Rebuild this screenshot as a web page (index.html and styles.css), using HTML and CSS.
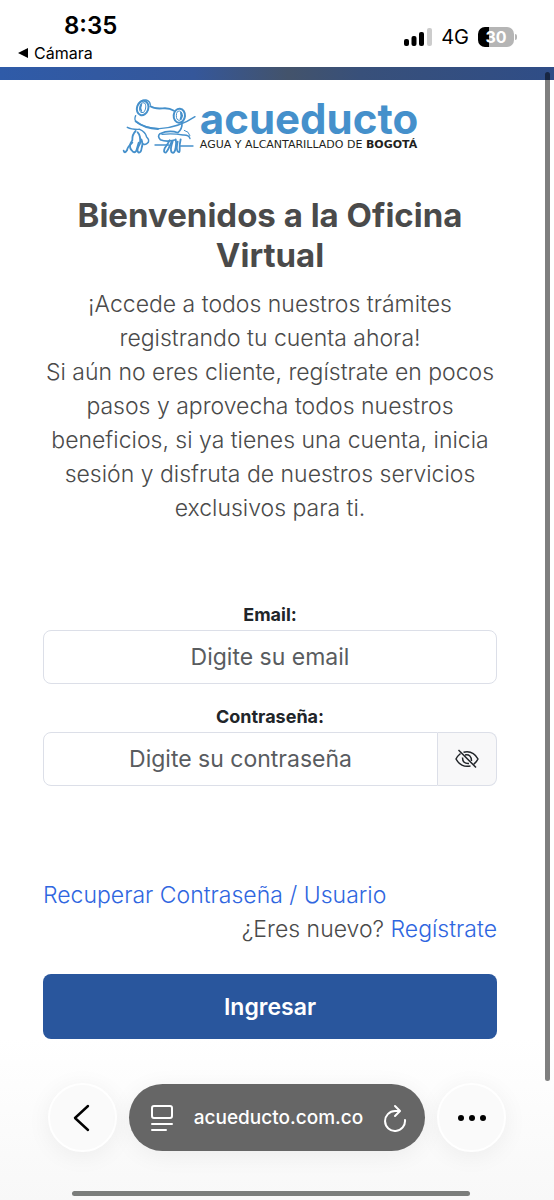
FILE: index.html
```html
<!DOCTYPE html>
<html lang="es">
<head>
  <meta charset="UTF-8">
  <meta name="viewport" content="width=device-width, initial-scale=1.0">
  <title>Oficina Virtual - Acueducto de Bogotá</title>
  <link rel="stylesheet" href="styles.css">
</head>
<body>
  <header class="status-bar">
    <div class="status-left">
      <span class="time">8:35</span>
      <a class="back-app" href="#">
        <svg width="10" height="10" viewBox="0 0 10 10"><path d="M0 5L10 0V10Z" fill="#000"/></svg>
        Cámara
      </a>
    </div>
    <div class="status-right">
      <svg width="28" height="18" viewBox="0 0 28 18">
        <rect x="0" y="11" width="5" height="7" rx="2"/>
        <rect x="7.500" y="8" width="5" height="10" rx="2"/>
        <rect x="15" y="4" width="5" height="14" rx="2"/>
        <rect x="23" y="0" width="5" height="18" rx="2" fill="#ccc"/>
      </svg>
      <span class="network">4G</span>
      <span class="battery">30</span>
    </div>
  </header>
  <div class="banner"></div>

  <main class="content">
    <div class="logo">
      <svg class="frog" viewBox="36 24 220 174" fill="none" stroke="#4590cb" stroke-width="5.500" stroke-linecap="round" stroke-linejoin="round">
        <ellipse cx="97" cy="54" rx="17" ry="22" transform="rotate(18 97 54)" stroke-width="6"/>
        <ellipse cx="97" cy="53" rx="9" ry="15" transform="rotate(12 97 53)" stroke-width="3"/>
        <path d="M93 44Q88 53 93 63" stroke-width="5"/>
        <path d="M84 43Q91 29 107 30Q119 33 120 45" stroke-width="4"/>
        <ellipse cx="207" cy="77" rx="17" ry="21" transform="rotate(5 207 77)" stroke-width="6"/>
        <ellipse cx="207" cy="77" rx="9" ry="14" stroke-width="3"/>
        <path d="M212 68Q215 77 211 87" stroke-width="6"/>
        <path d="M120 49Q132 57 157 55Q176 53 191 62"/>
        <path d="M76 77Q70 89 79 97Q104 115 147 116Q206 113 254 80" stroke-width="4"/>
        <path d="M76 94Q103 116 143 117" stroke-width="6"/>
        <path d="M51 112Q64 119 88 118Q105 125 109 141Q117 148 114 157Q107 166 99 162" stroke-width="4.500"/>
        <path d="M76 123Q65 134 66 151Q53 169 64 181Q72 192 78 182Q81 172 85 158"/>
        <path d="M66 158Q51 171 50 181Q43 192 40 182"/>
        <path d="M82 127Q92 137 89 161Q77 182 84 187Q92 190 94 174Q99 161 93 148"/>
        <path d="M215 98Q216 117 203 128Q176 119 149 131Q140 139 150 149Q168 157 193 150" stroke-width="5"/>
        <path d="M155 133Q186 129 218 135Q236 134 239 146" stroke-width="4"/>
        <path d="M222 121Q236 124 239 137" stroke-width="3"/>
        <path d="M134 165H175M210 168H248" stroke-width="4"/>
        <path d="M178 151Q170 165 163 175Q158 188 166 188Q172 184 184 155"/>
        <path d="M187 154Q178 179 184 187Q193 193 196 173Q199 158 196 148"/>
        <path d="M202 155Q197 178 202 184Q208 190 208 181Q207 163 211 148"/>
      </svg>
      <div class="logo-text">
        <span class="logo-name">acueducto</span>
        <span class="logo-sub">AGUA Y ALCANTARILLADO DE <b>BOGOTÁ</b></span>
      </div>
    </div>

    <h1>Bienvenidos a la Oficina Virtual</h1>
    <p class="intro">¡Accede a todos nuestros trámites registrando tu cuenta ahora!<br>
      Si aún no eres cliente, regístrate en pocos pasos y aprovecha todos nuestros beneficios, si ya tienes una cuenta, inicia sesión y disfruta de nuestros servicios exclusivos para ti.</p>

    <form class="login-form">
      <label for="email">Email:</label>
      <input type="email" id="email" placeholder="Digite su email">

      <label for="password">Contraseña:</label>
      <div class="input-group">
        <input type="password" id="password" placeholder="Digite su contraseña">
        <button type="button" class="toggle-btn" aria-label="Mostrar contraseña">
          <svg width="24" height="20" viewBox="0 0 24 20" fill="none" stroke="#212529" stroke-width="1.500">
            <path d="M8.500 3.200Q18 1 23 10Q21.500 13 18.500 15.500M15.500 17Q6 19 1 10Q2.500 7 5.500 4.500"/>
            <path d="M10 6Q16.500 5 16.500 12M14 14.500Q7.500 15 7.500 8.500"/>
            <path d="M3.500 1L21 18.500"/>
          </svg>
        </button>
      </div>

      <div class="links">
        <a href="#">Recuperar Contraseña / Usuario</a>
        <p class="register">¿Eres nuevo? <a href="#">Regístrate</a></p>
      </div>
      <button type="submit" class="submit-btn">Ingresar</button>
    </form>
  </main>

  <footer class="browser-bar">
    <nav class="browser-nav">
      <button type="button" class="round-btn" aria-label="Atrás">
        <svg width="20" height="28" viewBox="0 0 20 28" fill="none" stroke="#000" stroke-width="2.400" stroke-linecap="round" stroke-linejoin="round"><path d="M15 2L2 14L15 26"/></svg>
      </button>
      <div class="address">
        <svg width="24" height="28" viewBox="0 0 24 28" fill="none" stroke="#fff" stroke-width="2" stroke-linecap="round">
          <rect x="2" y="2" width="20" height="12" rx="2"/>
          <path d="M2 20H22M2 26H16"/>
        </svg>
        <span>acueducto.com.co</span>
        <button type="button" class="reload-btn" aria-label="Recargar">
          <svg width="24" height="28" viewBox="0 0 24 28" fill="none" stroke="#fff" stroke-width="2" stroke-linecap="round" stroke-linejoin="round">
            <path d="M16 7H12A10 10 0 1 0 22 16"/>
            <path d="M12 2L17 7L12 12"/>
          </svg>
        </button>
      </div>
      <button type="button" class="round-btn" aria-label="Más opciones">
        <svg width="28" height="6" viewBox="0 0 28 6"><circle cx="3" cy="3" r="3"/><circle cx="14" cy="3" r="3"/><circle cx="25" cy="3" r="3"/></svg>
      </button>
    </nav>
    <div class="home-indicator"></div>
  </footer>
  <div class="scroll-thumb"></div>
</body>
</html>
```
FILE: styles.css
```css
* {
  box-sizing: border-box;
}
body {
  font-family: Inter, 'Liberation Sans', sans-serif;
  background: #fff;
  color: #4a4a4a;
  margin: 0;
  min-height: 100vh;
  display: flex;
  flex-direction: column;
  position: relative;
}
svg {
  display: block;
}
button {
  font-family: inherit;
  border: none;
  padding: 0;
  cursor: pointer;
}
a {
  color: #2f66e0;
  text-decoration: none;
}

/* status bar */
.status-bar {
  height: 67px;
  padding: 12px 40px 0 18px;
  display: flex;
  justify-content: space-between;
  color: #000;
}
.status-left {
  display: flex;
  flex-direction: column;
}
.time {
  font-size: 24px;
  font-weight: 600;
  line-height: 28px;
  padding-left: 46px;
}
.back-app {
  display: flex;
  align-items: center;
  gap: 6px;
  font-size: 16px;
  line-height: 26px;
  color: #000;
}
.status-right {
  display: flex;
  align-items: center;
  gap: 9px;
  height: 50px;
}
.network {
  font-size: 20px;
}
.battery {
  position: relative;
  width: 36px;
  height: 20px;
  border-radius: 7px;
  background: linear-gradient(to right, #000 30%, #b5b5b5 30%);
  color: #fff;
  font-size: 16px;
  font-weight: 700;
  line-height: 20px;
  text-align: center;
}
.battery::after {
  content: "";
  position: absolute;
  left: 37px;
  top: 7px;
  width: 2px;
  height: 6px;
  border-radius: 0 2px 2px 0;
  background: #b5b5b5;
}
.banner {
  height: 13px;
  background: linear-gradient(to right, #2f5ba8, #35579a 35%, #43536b 52%, #38507a 65%, #2f4d87);
}

/* login page */
.content {
  flex: 1;
  padding: 18px 57px 0 43px;
  text-align: center;
}
.logo {
  display: flex;
  justify-content: center;
  gap: 4px;
}
.frog {
  width: 74px;
  height: 58px;
}
.logo-text {
  display: flex;
  flex-direction: column;
  text-align: left;
  white-space: nowrap;
}
.logo-name {
  font-size: 42px;
  font-weight: 700;
  line-height: 42px;
  color: #4590cb;
}
.logo-sub {
  font-family: 'DejaVu Sans', sans-serif;
  font-size: 11px;
  line-height: 10px;
  color: #231f20;
}
h1 {
  margin: 39px 0 12px;
  font-size: 33px;
  font-weight: 700;
  line-height: 40px;
}
.intro {
  margin: 0 0 78px;
  font-size: 23px;
  font-weight: 300;
  line-height: 34px;
}
.login-form label {
  display: block;
  font-size: 18px;
  font-weight: 700;
  line-height: 24px;
  margin-bottom: 3px;
  color: #212529;
}
.login-form input {
  display: block;
  width: 100%;
  height: 54px;
  margin-bottom: 21px;
  padding: 0 18px;
  border: 1px solid #dcdfe8;
  border-radius: 8px;
  background: #fff;
  font-family: inherit;
  font-size: 23px;
  text-align: center;
}
.login-form input::placeholder {
  color: #595c5f;
  opacity: 1;
}
.input-group {
  display: flex;
}
.login-form .input-group input {
  flex: 1;
  min-width: 0;
  margin-bottom: 0;
  border-radius: 8px 0 0 8px;
}
.toggle-btn {
  width: 59px;
  display: flex;
  align-items: center;
  justify-content: center;
  background: #f8f8f9;
  border: 1px solid #dcdfe8;
  border-left: none;
  border-radius: 0 8px 8px 0;
}
.links {
  margin: 92px 0 28px;
  font-size: 23px;
  font-weight: 300;
  line-height: 34px;
  text-align: left;
}
.register {
  margin: 0;
  text-align: right;
}
.submit-btn {
  width: 100%;
  height: 65px;
  border-radius: 8px;
  background: #29569d;
  color: #fff;
  font-size: 23px;
  font-weight: 600;
}

/* browser toolbar */
.browser-bar {
  padding: 44px 48px 5px;
  background: linear-gradient(to bottom, #fff, #f8f8f8);
}
.browser-nav {
  display: flex;
  align-items: center;
  gap: 12px;
}
.round-btn {
  width: 69px;
  height: 69px;
  flex: none;
  display: flex;
  align-items: center;
  justify-content: center;
  border: 2px solid #fff;
  border-radius: 50%;
  background: #fafafa;
  box-shadow: 0 4px 24px rgba(0,0,0,0.06);
}
.address {
  flex: 1;
  height: 67px;
  padding: 0 18px 0 21px;
  display: flex;
  align-items: center;
  justify-content: space-between;
  border-radius: 34px;
  background: #666;
  color: #fff;
  font-size: 19px;
  font-weight: 500;
  box-shadow: 0 4px 24px rgba(0,0,0,0.06);
}
.reload-btn {
  background: none;
}
.home-indicator {
  height: 5px;
  margin: 39px 36px 0 24px;
  border-radius: 3px;
  background: #7b7d7b;
}
.scroll-thumb {
  position: absolute;
  top: 72px;
  right: 4px;
  bottom: 120px;
  width: 5px;
  border-radius: 3px;
  background: rgba(0,0,0,0.5);
}
```
